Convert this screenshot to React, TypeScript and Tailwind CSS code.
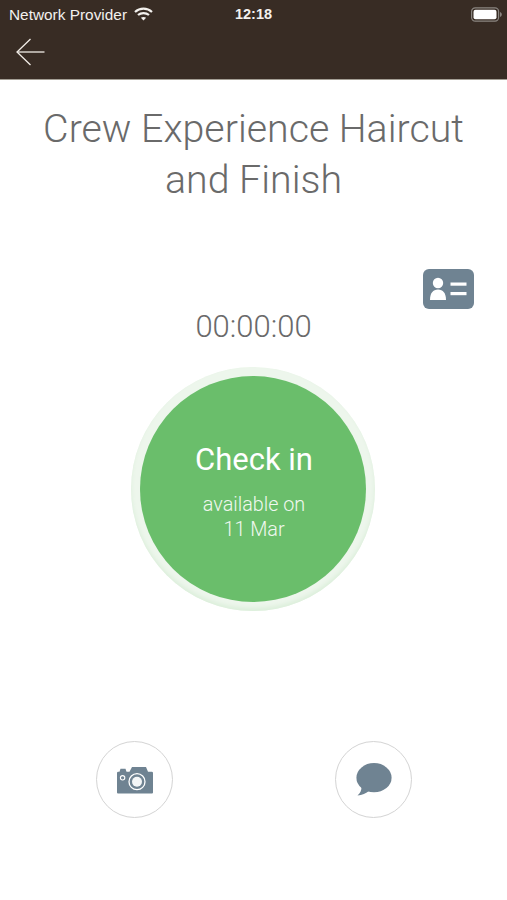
import React from 'react'

function WifiIcon() {
  return (
    <svg width="19" height="14" viewBox="0 0 19 14" fill="none" stroke="#f3f1ee" strokeWidth="2.2">
      <path d="M1 5 C5.8 0.6 13.2 0.6 18 5" />
      <path d="M4 8 C7 5.4 12 5.4 15 8" />
      <path d="M9.5 13.4 L6.9 10.8 C8.4 9.7 10.6 9.7 12.1 10.8 Z" fill="#f3f1ee" stroke="none" />
    </svg>
  )
}

function BatteryIcon() {
  return (
    <svg width="31" height="15" viewBox="0 0 31 15">
      <rect x="0.6" y="0.8" width="27" height="13.4" rx="3.6" fill="none" stroke="#8a8580" strokeWidth="1.2" />
      <rect x="2.5" y="2.7" width="23" height="9.6" rx="2" fill="#ffffff" />
      <path d="M29 5 C30.2 5.4 30.8 6.4 30.8 7.5 C30.8 8.6 30.2 9.6 29 10 Z" fill="#8a8580" />
    </svg>
  )
}

function CardIcon() {
  return (
    <svg width="51" height="40" viewBox="0 0 51 40">
      <rect x="0" y="0" width="51" height="40" rx="6" fill="#6f8392" />
      <circle cx="15" cy="14" r="5.2" fill="#ffffff" />
      <path d="M7 31 C7 24 10 20.5 15 20.5 C20 20.5 23 24 23 31 Z" fill="#ffffff" />
      <rect x="27.5" y="13.5" width="16" height="3.2" fill="#ffffff" />
      <rect x="27.5" y="23" width="16" height="3.2" fill="#ffffff" />
    </svg>
  )
}

function CameraIcon() {
  return (
    <svg width="36" height="28" viewBox="0 0 36 28">
      <path
        d="M0 7 Q0 5.8 1.2 5.8 L2.5 5.8 L3.5 2.8 L8.5 2.8 L9.5 5.8 L12.5 5.8 L15 1 L29 1 L31 5.8 L34.8 5.8 Q36 5.8 36 7 L36 26.5 Q36 27.5 35 27.5 L1 27.5 Q0 27.5 0 26.5 Z"
        fill="#6f8392"
      />
      <circle cx="20" cy="15.7" r="8" fill="none" stroke="#ffffff" strokeWidth="1.3" />
      <circle cx="20" cy="15.7" r="5" fill="#f4f6f7" />
      <circle cx="5.6" cy="11.8" r="2.2" fill="none" stroke="#ffffff" strokeWidth="1.1" />
    </svg>
  )
}

function BubbleIcon() {
  return (
    <svg width="36" height="33" viewBox="0 0 36 33">
      <ellipse cx="18" cy="14.7" rx="17.6" ry="14.6" fill="#6f8392" />
      <path d="M5.5 24 C5.5 27 4.5 30 1.5 32.5 C6 32 10 30.5 13.5 27.5 Z" fill="#6f8392" />
    </svg>
  )
}

function RoundButton({ children }: { children: React.ReactNode }) {
  return (
    <div className="flex h-[77px] w-[77px] items-center justify-center rounded-full border-[1.5px] border-[#d4d4d4] bg-white">
      {children}
    </div>
  )
}

export default function App() {
  return (
    <div className="flex h-[900px] w-[507px] flex-col overflow-hidden bg-white font-['Roboto',sans-serif]">
      <header className="h-[80px] shrink-0 border-b border-[#a39e94] bg-[#382c24]">
        <div className="flex h-[28px] items-center justify-between pl-[9px] pr-[5px] pt-[1px] font-['Liberation_Sans',sans-serif] text-[#f3f1ee]">
          <div className="flex w-[191px] items-center gap-[7px] text-[15.4px]">
            <span>Network Provider</span>
            <WifiIcon />
          </div>
          <span className="text-[14.5px] font-bold">12:18</span>
          <div className="flex w-[195px] justify-end">
            <BatteryIcon />
          </div>
        </div>
        <div className="pl-[16px] pt-[10px]">
          <svg width="29" height="28" viewBox="0 0 29 28" fill="none" stroke="#f1ece6" strokeWidth="1.3" className="block">
            <path d="M14.5 1 L1 14 L14.5 27" />
            <path d="M1 14 L28.5 14" />
          </svg>
        </div>
      </header>

      <main className="flex flex-1 flex-col items-center">
        <h1 className="mt-[24px] w-[450px] text-center text-[39.3px] leading-[51px] font-light text-[#6a6a6a]">
          Crew Experience Haircut and Finish
        </h1>

        <div className="mt-[63px] flex w-full justify-end pr-[33px]">
          <CardIcon />
        </div>

        <div className="mt-0 text-[31px] leading-[36px] font-light text-[#6a6a6a]">00:00:00</div>

        <div className="mt-[22px] mr-[1px] flex h-[244px] w-[244px] items-center justify-center rounded-full bg-[#edf6ec] shadow-[inset_0_-3px_4px_#dcefdb]">
          <div className="flex h-[226px] w-[226px] flex-col items-center rounded-full bg-[#6abe6b] pl-[2px] text-white">
            <div className="mt-[65px] text-[31px] leading-[38px]">Check in</div>
            <div className="mt-[13px] text-center text-[19.8px] leading-[25px] font-light text-[#f0f8f0]">
              available on
              <br />
              11 Mar
            </div>
          </div>
        </div>

        <div className="mt-[130px] flex w-full justify-between pl-[96px] pr-[95px]">
          <RoundButton>
            <CameraIcon />
          </RoundButton>
          <RoundButton>
            <BubbleIcon />
          </RoundButton>
        </div>
      </main>
    </div>
  )
}
